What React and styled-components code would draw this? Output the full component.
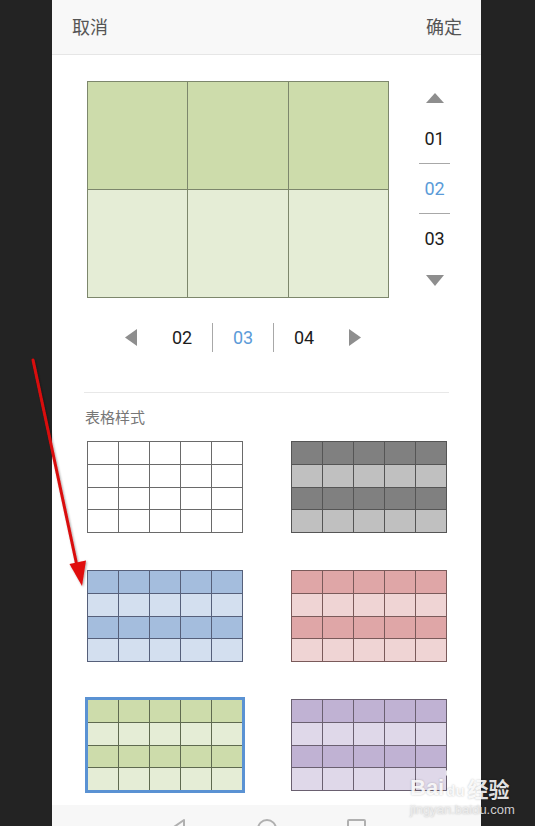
import React from 'react';
import styled, { createGlobalStyle } from 'styled-components';

const Global = createGlobalStyle`
  html, body { margin: 0; padding: 0; background: #232323; }
  body { font-family: "Noto Sans CJK SC", "Noto Sans", sans-serif; }
  #root { width: 535px; height: 826px; }
`;

const Screen = styled.div`
  position: relative;
  width: 535px;
  height: 826px;
  overflow: hidden;
  background: #232323;
  padding-left: 52px;
  box-sizing: border-box;
`;

const Phone = styled.div`
  width: 429px;
  height: 826px;
  background: #fff;
  display: flex;
  flex-direction: column;
`;

const Header = styled.header`
  height: 55px;
  flex-shrink: 0;
  box-sizing: border-box;
  background: #f8f8f8;
  border-bottom: 1px solid #e6e6e6;
  display: flex;
  align-items: center;
  justify-content: space-between;
  padding: 0 19px 2px 20px;
`;

const HeaderBtn = styled.span`
  font-size: 18px;
  color: #555;
  line-height: 1;
`;

const Body = styled.div`
  flex: 1;
  display: flex;
  flex-direction: column;
  overflow: hidden;
`;

const PreviewRow = styled.div`
  display: flex;
  margin-top: 26px;
  padding-left: 35px;
`;

const CellGrid = styled.div`
  display: grid;
  width: ${p => p.$w}px;
  height: ${p => p.$h}px;
  box-sizing: border-box;
  grid-template-columns: repeat(${p => p.$cols}, 1fr);
  grid-template-rows: repeat(${p => p.$rows}, 1fr);
  gap: 1px;
  padding: 1px;
  background: ${p => p.$line};
  outline: ${p => (p.$selected ? '3px solid #5a92d3' : 'none')};
  outline-offset: -1px;
`;

const Cell = styled.div`
  background: ${p => p.$bg};
`;

const VStepper = styled.div`
  margin-left: 30px;
  width: 31px;
  display: flex;
  flex-direction: column;
  align-items: center;
`;

const TriBox = styled.div`
  height: ${p => p.$h}px;
  display: flex;
  align-items: center;
  justify-content: center;
`;

const Num = styled.div`
  font-family: Roboto, "Noto Sans", sans-serif;
  font-size: 18px;
  color: ${p => (p.$active ? '#5b9bd8' : '#1c1c1c')};
  display: flex;
  align-items: center;
  justify-content: center;
`;

const VNum = styled(Num)`
  height: 49px;
  width: 31px;
`;

const HRule = styled.div`
  width: 31px;
  height: 1px;
  background: #a8a8a8;
`;

const HStepper = styled.div`
  display: flex;
  align-items: center;
  margin-top: 24px;
  padding-left: 73px;
  height: 30px;
`;

const HNum = styled(Num)`
  width: 60px;
  height: 30px;
`;

const VRule = styled.div`
  width: 1px;
  height: 29px;
  background: #a8a8a8;
`;

const Arrow = styled.svg`
  display: block;
  margin: ${p => p.$m || '0'};
`;

const Separator = styled.div`
  margin: 40px 0 0 32px;
  width: 365px;
  height: 1px;
  background: #e8e8e8;
`;

const Label = styled.div`
  margin: 14px 0 0 33px;
  font-size: 15px;
  line-height: 20px;
  color: #777;
`;

const StyleGrid = styled.div`
  display: grid;
  grid-template-columns: 156px 156px;
  column-gap: 48px;
  row-gap: 37px;
  margin-top: 14px;
  padding-left: 35px;
`;

const NavBar = styled.nav`
  height: 21px;
  flex-shrink: 0;
  background: #f7f7f7;
  display: flex;
  align-items: flex-start;
  padding: 13px 0 0 116px;
  box-sizing: border-box;
  gap: 69px;
  overflow: hidden;
`;

const Overlay = styled.svg`
  position: absolute;
  left: 0;
  top: 0;
  pointer-events: none;
`;

const Watermark = styled.div`
  position: absolute;
  left: 410px;
  top: 776px;
  color: rgba(255, 255, 255, 0.88);
  text-shadow: 0 0 2px rgba(0, 0, 0, 0.25);
  pointer-events: none;
  display: flex;
  flex-direction: column;
`;

const WmTop = styled.div`
  display: flex;
  align-items: flex-end;
  font-family: "Liberation Sans", Arial, sans-serif;
  font-weight: bold;
  font-size: 22px;
  line-height: 24px;
`;

const WmDu = styled.span`
  position: relative;
  font-size: 15px;
  line-height: 18px;
  margin: 0 3px 0 2px;
`;

const WmCn = styled.span`
  font-family: "Noto Sans CJK SC", sans-serif;
  font-size: 21px;
`;

const WmSub = styled.div`
  font-family: "Liberation Sans", Arial, sans-serif;
  font-size: 13px;
  line-height: 16px;
  margin-top: 2px;
  color: rgba(240, 240, 240, 0.85);
`;

const Paw = styled.svg`
  position: absolute;
  left: -2px;
  top: -17px;
`;

const Table = ({ rows, cols, w, h, line, dark, light, selected }) => {
  const cells = [];
  for (let r = 0; r < rows; r++) {
    for (let c = 0; c < cols; c++) {
      cells.push(<Cell key={`${r}-${c}`} $bg={r % 2 === 0 ? dark : light} />);
    }
  }
  return (
    <CellGrid $rows={rows} $cols={cols} $w={w} $h={h} $line={line} $selected={selected}>
      {cells}
    </CellGrid>
  );
};

const Tri = ({ dir, w, h }) => {
  const pts = {
    up: `0,${h} ${w / 2},0 ${w},${h}`,
    down: `0,0 ${w / 2},${h} ${w},0`,
    left: `${w},0 0,${h / 2} ${w},${h}`,
    right: `0,0 ${w},${h / 2} 0,${h}`,
  }[dir];
  return (
    <Arrow width={w} height={h} viewBox={`0 0 ${w} ${h}`}>
      <polygon points={pts} fill="#8e8e8e" />
    </Arrow>
  );
};

const styles = [
  { dark: '#ffffff', light: '#ffffff', line: '#6a6a6a' },
  { dark: '#808080', light: '#c0c0c0', line: '#555555' },
  { dark: '#a4bddd', light: '#d3dfef', line: '#56607a' },
  { dark: '#dfa6a7', light: '#efd4d4', line: '#7a5a5a' },
  { dark: '#cddcab', light: '#e5edd6', line: '#5f6a50', selected: true },
  { dark: '#c0b2d3', light: '#dfd8e9', line: '#6a6070' },
];

export default function App() {
  return (
    <Screen>
      <Global />
      <Phone>
        <Header>
          <HeaderBtn>取消</HeaderBtn>
          <HeaderBtn>确定</HeaderBtn>
        </Header>
        <Body>
          <PreviewRow>
            <Table rows={2} cols={3} w={302} h={217} line="#7d876c" dark="#cddcab" light="#e5edd6" />
            <VStepper>
              <TriBox $h={33}><Tri dir="up" w={18} h={10} /></TriBox>
              <VNum>01</VNum>
              <HRule />
              <VNum $active>02</VNum>
              <HRule />
              <VNum>03</VNum>
              <TriBox $h={34}><Tri dir="down" w={18} h={11} /></TriBox>
            </VStepper>
          </PreviewRow>
          <HStepper>
            <Tri dir="left" w={12} h={17} />
            <Arrow as="div" $m="0 0 0 15px" />
            <HNum>02</HNum>
            <VRule />
            <HNum $active>03</HNum>
            <VRule />
            <HNum>04</HNum>
            <Arrow as="div" $m="0 15px 0 0" />
            <Tri dir="right" w={12} h={17} />
          </HStepper>
          <Separator />
          <Label>表格样式</Label>
          <StyleGrid>
            {styles.map((s, i) => (
              <Table key={i} rows={4} cols={5} w={156} h={92} line={s.line} dark={s.dark} light={s.light} selected={s.selected} />
            ))}
          </StyleGrid>
        </Body>
        <NavBar>
          <svg width="20" height="22" viewBox="0 0 20 22">
            <polygon points="16,2 3,11 16,20" fill="none" stroke="#b0b0b0" strokeWidth="2" strokeLinejoin="round" />
          </svg>
          <svg width="20" height="22" viewBox="0 0 20 22">
            <circle cx="10" cy="11" r="9" fill="none" stroke="#b0b0b0" strokeWidth="2" />
          </svg>
          <svg width="20" height="22" viewBox="0 0 20 22">
            <rect x="2" y="2" width="17" height="17" rx="1" fill="none" stroke="#b0b0b0" strokeWidth="2" />
          </svg>
        </NavBar>
      </Phone>
      <Overlay width="535" height="826" viewBox="0 0 535 826">
        <defs>
          <filter id="sh" x="-20%" y="-20%" width="140%" height="140%">
            <feDropShadow dx="1" dy="1" stdDeviation="1.2" floodColor="#000" floodOpacity="0.35" />
          </filter>
        </defs>
        <g filter="url(#sh)">
          <line x1="33" y1="360" x2="77" y2="566" stroke="#d90d0d" strokeWidth="3" strokeLinecap="round" />
          <polygon points="82,586 69.5,564 86,560.5" fill="#e00c0c" />
        </g>
      </Overlay>
      <Watermark>
        <WmTop>
          <span>Bai</span>
          <WmDu>
            <Paw width="22" height="18" viewBox="0 0 22 18">
              <g fill="none" stroke="rgba(255,255,255,0.85)" strokeWidth="1.5">
                <ellipse cx="5" cy="8" rx="2.5" ry="3" />
                <ellipse cx="10" cy="4" rx="2.5" ry="3" />
                <ellipse cx="16" cy="5" rx="2.5" ry="3" />
                <ellipse cx="19" cy="11" rx="2" ry="2.5" />
              </g>
            </Paw>
            du
          </WmDu>
          <WmCn>经验</WmCn>
        </WmTop>
        <WmSub>jingyan.baidu.com</WmSub>
      </Watermark>
    </Screen>
  );
}
